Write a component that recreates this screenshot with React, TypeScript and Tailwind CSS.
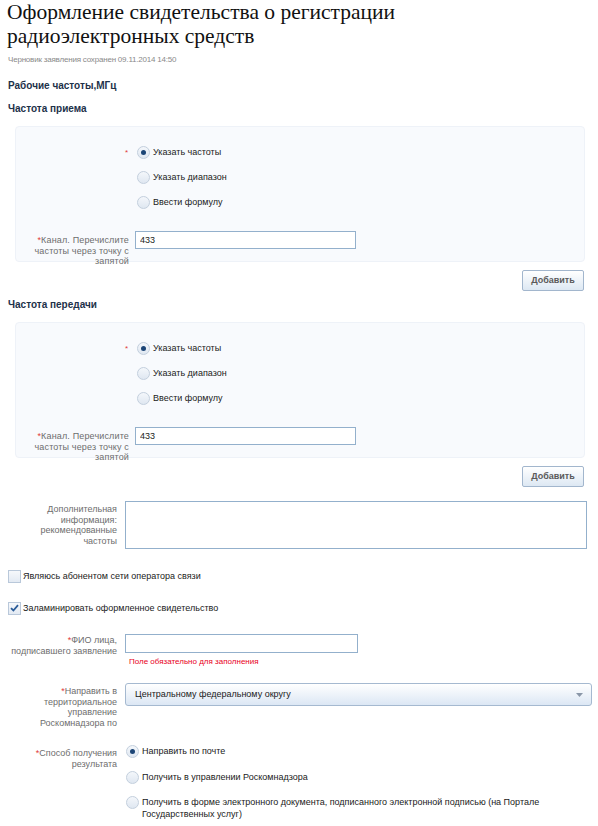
import React from "react";

const font = { fontFamily: '"Liberation Sans", Arial, sans-serif' };

function Radio({ checked }: { checked?: boolean }) {
  return (
    <span className="w-[13px] h-[13px] shrink-0 rounded-full border border-[#c3cfdd] bg-gradient-to-b from-[#f4f7fb] to-[#dfe7f1] flex items-center justify-center">
      {checked && <span className="w-[5px] h-[5px] rounded-full bg-[#1c4576]" />}
    </span>
  );
}

function Checkbox({ checked }: { checked?: boolean }) {
  return (
    <span className="w-[13px] h-[13px] shrink-0 border border-[#b9c8da] bg-gradient-to-b from-[#f6f8fb] to-[#e3eaf3] flex items-center justify-center">
      {checked && (
        <svg width="9" height="8" viewBox="0 0 9 8">
          <path d="M1 4.2 L3.4 6.5 L8 1.2" stroke="#2a5c98" strokeWidth="1.8" fill="none" />
        </svg>
      )}
    </span>
  );
}

function Star() {
  return <span className="text-[#e03a3a]">*</span>;
}

function AddButton() {
  return (
    <div className="flex justify-end pr-[14px] mt-[8px]">
      <button className="w-[62px] h-[21px] rounded-[2px] border border-[#a2b6cd] bg-gradient-to-b from-[#ffffff] to-[#dde8f3] text-[9px] font-bold text-[#5a5a5a]">
        Добавить
      </button>
    </div>
  );
}

// блок выбора частот (прием / передача)
function FreqPanel() {
  const opts = ["Указать частоты", "Указать диапазон", "Ввести формулу"];
  return (
    <div className="ml-[15px] mr-[13px] mt-[11px] rounded-[4px] border border-[#eef2f8] bg-[#f8fafd] pt-[19px] pb-[12px]">
      <div className="flex flex-col gap-[12px]">
        {opts.map((o, i) => (
          <div key={o} className="flex items-center h-[13px]">
            <div className="w-[113px] text-right text-[8px] leading-none pr-[1px]">{i === 0 && <Star />}</div>
            <div className="ml-[8px] flex items-center gap-[3px] text-[9px] text-[#1a1a1a]">
              <Radio checked={i === 0} />
              <span>{o}</span>
            </div>
          </div>
        ))}
      </div>
      <div className="flex items-start h-[18px] mt-[22px]">
        <div className="w-[113px] text-right text-[9px] leading-[10.5px] tracking-[0.15px] text-[#6d6d6d] pt-[4px]">
          <Star />Канал. Перечислите частоты через точку с запятой
        </div>
        <input
          defaultValue="433"
          className="ml-[6px] w-[221px] h-[18px] border border-[#93b0cc] bg-white px-[4px] text-[9px] text-[#1a1a1a] outline-none"
        />
      </div>
    </div>
  );
}

export default function App() {
  return (
    <div className="w-[598px] min-h-[826px] bg-white" style={font}>
      <h1
        className="pl-[7px] max-w-[440px] text-[21.5px] leading-[24px] text-[#111]"
        style={{ fontFamily: '"Liberation Serif", "Times New Roman", serif' }}
      >
        Оформление свидетельства о регистрации радиоэлектронных средств
      </h1>
      <div className="pl-[8px] mt-[7px] text-[8px] leading-[10px] text-[#8a8a8a] tracking-[-0.2px]">
        Черновик заявления сохранен 09.11.2014 14:50
      </div>

      <div className="pl-[8px] mt-[15px] text-[10px] leading-[12px] font-bold text-[#1d3149]">Рабочие частоты,МГц</div>
      <div className="pl-[8px] mt-[11px] text-[10px] leading-[12px] font-bold text-[#1d3149]">Частота приема</div>
      <FreqPanel />
      <AddButton />

      <div className="pl-[8px] mt-[8px] text-[10px] leading-[12px] font-bold text-[#1d3149]">Частота передачи</div>
      <FreqPanel />
      <AddButton />

      <div className="flex items-start mt-[14px]">
        <div className="ml-[9px] w-[108px] text-right text-[9px] leading-[10.5px] text-[#6d6d6d] pt-[3px]">
          Дополнительная информация: рекомендованные частоты
        </div>
        <textarea className="ml-[8px] w-[462px] h-[48px] border border-[#93b0cc] bg-white resize-none outline-none" />
      </div>

      <div className="flex flex-col gap-[18px] mt-[21px] pl-[8px]">
        <div className="flex items-center gap-[2px] text-[9px] text-[#1a1a1a]">
          <Checkbox />
          <span>Являюсь абонентом сети оператора связи</span>
        </div>
        <div className="flex items-center gap-[2px] text-[9px] text-[#1a1a1a]">
          <Checkbox checked />
          <span>Заламинировать оформленное свидетельство</span>
        </div>
      </div>

      <div className="flex items-start mt-[16px]">
        <div className="ml-[9px] w-[108px] text-right text-[9px] leading-[10.5px] text-[#6d6d6d] pt-[4px]">
          <Star />ФИО лица, подписавшего заявление
        </div>
        <div className="ml-[8px]">
          <input className="w-[233px] h-[19px] border border-[#93b0cc] bg-white outline-none" />
          <div className="pl-[4px] mt-[2px] text-[8px] leading-[10px] text-[#e8001c]">Поле обязательно для заполнения</div>
        </div>
      </div>

      <div className="flex items-start mt-[16px]">
        <div className="ml-[9px] w-[108px] text-right text-[9px] leading-[10.5px] text-[#6d6d6d] pt-[3px]">
          <Star />Направить в территориальное управление Роскомнадзора по
        </div>
        <div className="ml-[8px] w-[467px] h-[23px] rounded-[3px] border border-[#a5b9d0] bg-gradient-to-b from-[#ffffff] to-[#dce7f4] flex items-center justify-between pl-[9px] pr-[8px] text-[9px] text-[#1a1a1a]">
          <span>Центральному федеральному округу</span>
          <svg width="7" height="4" viewBox="0 0 7 4">
            <path d="M0 0 L7 0 L3.5 4 Z" fill="#8a97a8" />
          </svg>
        </div>
      </div>

      <div className="flex items-start mt-[17px]">
        <div className="ml-[9px] w-[108px] text-right text-[9px] leading-[10.5px] text-[#6d6d6d] pt-[3px]">
          <Star />Способ получения результата
        </div>
        <div className="ml-[9px] flex flex-col gap-[12px] text-[9px] text-[#1a1a1a]">
          <div className="flex items-center gap-[3px]">
            <Radio checked />
            <span>Направить по почте</span>
          </div>
          <div className="flex items-center gap-[3px]">
            <Radio />
            <span>Получить в управлении Роскомнадзора</span>
          </div>
          <div className="flex items-start gap-[3px]">
            <Radio />
            <span className="w-[420px] leading-[12px]">
              Получить в форме электронного документа, подписанного электронной подписью (на Портале Государственных услуг)
            </span>
          </div>
        </div>
      </div>
    </div>
  );
}
